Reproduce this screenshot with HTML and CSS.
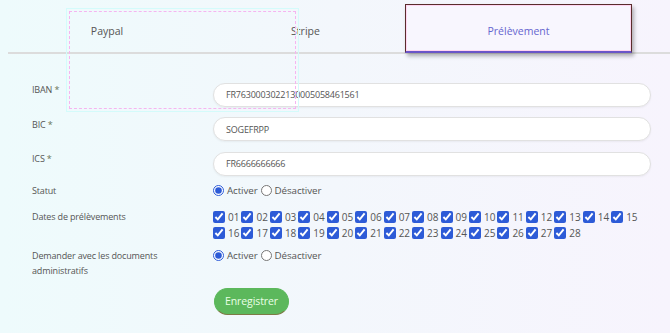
FILE: index.html
```html
<!DOCTYPE html>
<html>
<head>
    <meta name="viewport" content="width=device-width, initial-scale=1.0">
    <link rel="stylesheet" href="styles.css">
</head>
<body>
    <div class="page">
        <div class="tabs">
            <div class="tab tab-paypal">Paypal</div>
            <div class="tab tab-stripe">Stripe</div>
            <div class="tab tab-active">Prélèvement</div>
        </div>

        <!-- capture overlay left on the screenshot -->
        <div class="overlay-box"></div>

        <form class="form" onsubmit="return false">
            <div class="row">
                <label class="lbl">IBAN <span class="req">*</span></label>
                <div class="field"><input class="input" type="text" value="FR7630003022130005058461561"></div>
            </div>
            <div class="row">
                <label class="lbl">BIC <span class="req">*</span></label>
                <div class="field"><input class="input" type="text" value="SOGEFRPP"></div>
            </div>
            <div class="row row-ics">
                <label class="lbl">ICS <span class="req">*</span></label>
                <div class="field"><input class="input" type="text" value="FR6666666666"></div>
            </div>
            <div class="row row-statut">
                <label class="lbl">Statut</label>
                <div class="field choices">
                    <label class="choice"><input type="radio" name="statut" checked>Activer</label>
                    <label class="choice"><input type="radio" name="statut">Désactiver</label>
                </div>
            </div>
            <div class="row row-dates">
                <label class="lbl">Dates de prélèvements</label>
                <div class="field days" id="days"></div>
            </div>
            <div class="row row-docs">
                <label class="lbl">Demander avec les documents administratifs</label>
                <div class="field choices">
                    <label class="choice"><input type="radio" name="docs" checked>Activer</label>
                    <label class="choice"><input type="radio" name="docs">Désactiver</label>
                </div>
            </div>
            <div class="row row-submit">
                <span class="lbl"></span>
                <div class="field"><button class="btn-save" type="submit">Enregistrer</button></div>
            </div>
        </form>
    </div>

    <script>
        // Build the 28 day checkboxes
        const days = document.getElementById('days');
        for (let i = 1; i <= 28; i++) {
            const num = String(i).padStart(2, '0');
            const item = document.createElement('label');
            item.className = 'day';
            item.innerHTML = `<input type="checkbox" checked>${num}`;
            days.appendChild(item);
        }
    </script>
</body>
</html>
```

FILE: styles.css
```css
/* Basic page setup */
body {
    margin: 0;
    font-family: "Open Sans", "Noto Sans", sans-serif;
    color: #555;
    background: linear-gradient(90deg, #eefbfc 0%, #f3f7fc 50%, #f7f4fd 100%);
    height: 333px;
    overflow: hidden;
}

.page {
    position: relative;
}

/* Tabs */
.tabs {
    display: flex;
    height: 52px;
    margin-left: 8px;
    border-bottom: 2px solid #dcdcdc;
}

.tab {
    display: flex;
    align-items: center;
    justify-content: center;
    padding-top: 10px;
    font-size: 10.5px;
    color: #555;
    box-sizing: border-box;
}

.tab-paypal {
    width: 198px;
}

.tab-stripe {
    width: 199px;
}

.tab-active {
    width: 227px;
    height: 49px;
    margin-top: 4px;
    padding-top: 5px;
    color: #6565cf;
    background: #f8f6fe;
    border: 1px solid #5a2c2c;
    border-bottom: 2px solid #6a55c8;
    box-shadow: inset 0 0 0 1px #ffd6f2, 2px 3px 4px #0000004d;
}

/* Faint capture frame */
.overlay-box {
    position: absolute;
    left: 69px;
    top: 11px;
    width: 225px;
    height: 96px;
    border: 1px dashed #f6b4f0;
    outline: 1px solid #d4fbfb;
    outline-offset: 2px;
    pointer-events: none;
}

/* Form */
.form {
    margin-top: 27px;
    padding-left: 32px;
}

.row {
    display: flex;
    margin-bottom: 9px;
}

.lbl {
    width: 181px;
    padding-right: 30px;
    box-sizing: border-box;
    font-size: 9px;
    letter-spacing: -0.15px;
    line-height: 15px;
    padding-top: 1px;
    color: #555;
}

.req {
    color: #6a7357;
}

.field {
    width: 438px;
}

.input {
    width: 100%;
    height: 24px;
    box-sizing: border-box;
    padding: 0 12px;
    border: 1px solid #e1e1e1;
    border-radius: 12px;
    background: white;
    font-family: inherit;
    font-size: 9px;
    letter-spacing: -0.2px;
    color: #555;
    box-shadow: 0 1px 2px #0000000d;
    outline: none;
}

.row-ics {
    margin-bottom: 7px;
}

/* Radios */
.row-statut {
    margin-bottom: 11px;
}

.row-statut .lbl {
    padding-top: 0;
}

.choices {
    display: flex;
    align-items: center;
    gap: 3px;
    height: 15px;
}

.choice {
    display: inline-flex;
    align-items: center;
    gap: 3px;
    font-size: 9.8px;
    letter-spacing: -0.1px;
    color: #555;
}

.choice input {
    width: 11px;
    height: 11px;
    margin: 0;
    accent-color: #2d5bd7;
}

/* Day checkboxes */
.row-dates {
    margin-bottom: 7px;
}

.row-dates .lbl {
    padding-top: 0;
    line-height: 16px;
}

.days {
    display: flex;
    flex-wrap: wrap;
}

.day {
    display: inline-flex;
    align-items: center;
    height: 16px;
    margin-right: 2px;
    font-size: 10px;
    color: #555;
}

.day input {
    width: 12px;
    height: 12px;
    margin: 0 3px 0 0;
    accent-color: #2d5bd7;
}

.row-docs {
    margin-bottom: 10px;
}

.row-docs .lbl {
    padding-top: 0;
}

/* Save button */
.btn-save {
    height: 27px;
    width: 75px;
    margin-left: 1px;
    padding: 0;
    border: 1px solid #5cb85c;
    border-bottom-color: #7d7a45;
    border-radius: 14px;
    background: #5cb85c;
    color: #eaffe6;
    font-family: inherit;
    font-size: 10.5px;
    letter-spacing: -0.1px;
    cursor: pointer;
}

.btn-save:hover {
    background: #4cae4c;
}
```
